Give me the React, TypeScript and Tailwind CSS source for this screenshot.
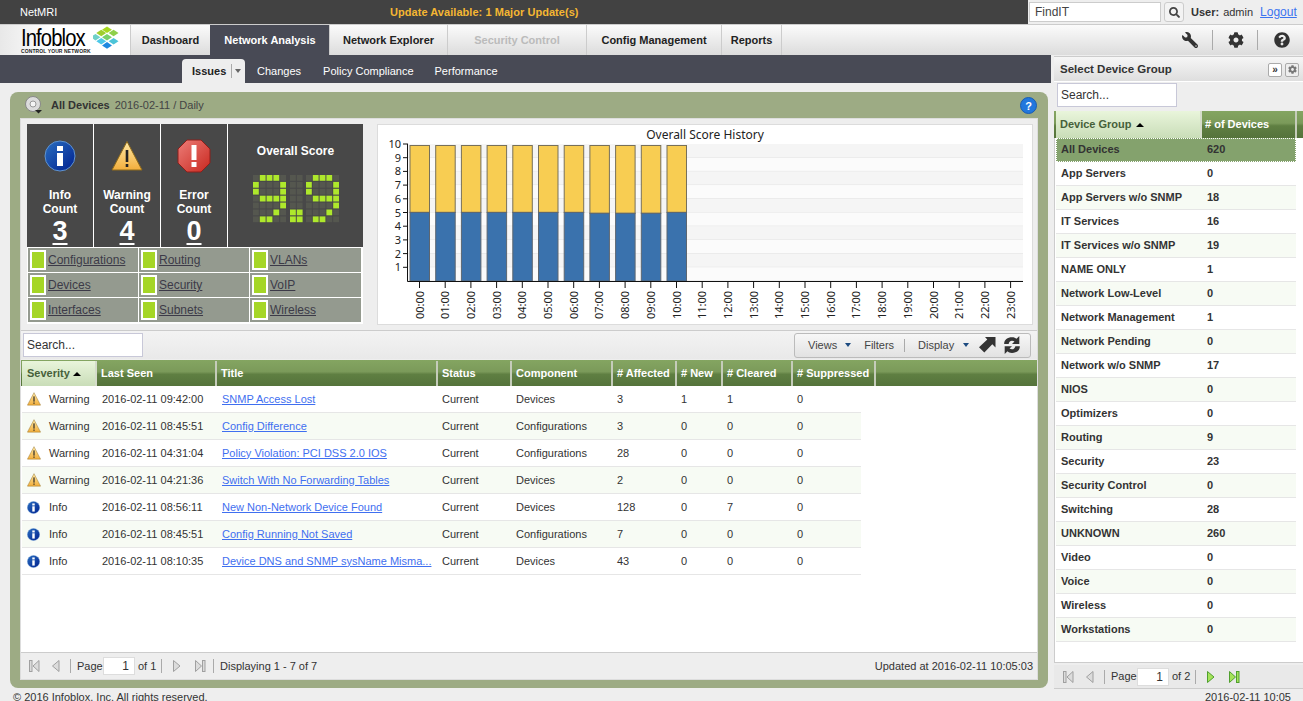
import { FaWrench, FaCog, FaQuestionCircle, FaSearch } from 'react-icons/fa';

const tabs = [
  { label: 'Dashboard', w: 'w-[80px]', cls: 'text-[#222] border-[#ccc]' },
  { label: 'Network Analysis', w: 'w-[119px]', cls: 'bg-[#484a55] text-white border-[#484a55]' },
  { label: 'Network Explorer', w: 'w-[118px]', cls: 'text-[#222] border-[#ccc]' },
  { label: 'Security Control', w: 'w-[139px]', cls: 'text-[#bbb] border-[#ccc]' },
  { label: 'Config Management', w: 'w-[135px]', cls: 'text-[#222] border-[#ccc]' },
  { label: 'Reports', w: 'w-[60px]', cls: 'text-[#222] border-[#ccc]' },
];

const issues = [
  ['Warning', '2016-02-11 09:42:00', 'SNMP Access Lost', 'Current', 'Devices', '3', '1', '1', '0'],
  ['Warning', '2016-02-11 08:45:51', 'Config Difference', 'Current', 'Configurations', '3', '0', '0', '0'],
  ['Warning', '2016-02-11 04:31:04', 'Policy Violation: PCI DSS 2.0 IOS', 'Current', 'Configurations', '28', '0', '0', '0'],
  ['Warning', '2016-02-11 04:21:36', 'Switch With No Forwarding Tables', 'Current', 'Devices', '2', '0', '0', '0'],
  ['Info', '2016-02-11 08:56:11', 'New Non-Network Device Found', 'Current', 'Devices', '128', '0', '7', '0'],
  ['Info', '2016-02-11 08:45:51', 'Config Running Not Saved', 'Current', 'Configurations', '7', '0', '0', '0'],
  ['Info', '2016-02-11 08:10:35', 'Device DNS and SNMP sysName Misma...', 'Current', 'Devices', '43', '0', '0', '0'],
];

const groups = [
  ['All Devices', '620'], ['App Servers', '0'], ['App Servers w/o SNMP', '18'], ['IT Services', '16'],
  ['IT Services w/o SNMP', '19'], ['NAME ONLY', '1'], ['Network Low-Level', '0'], ['Network Management', '1'],
  ['Network Pending', '0'], ['Network w/o SNMP', '17'], ['NIOS', '0'], ['Optimizers', '0'], ['Routing', '9'],
  ['Security', '23'], ['Security Control', '0'], ['Switching', '28'], ['UNKNOWN', '260'], ['Video', '0'],
  ['Voice', '0'], ['Wireless', '0'], ['Workstations', '0'],
];

const issueCols = [
  ['Last Seen', 'w-[120px]'], ['Title', 'w-[221px]'], ['Status', 'w-[74px]'], ['Component', 'w-[101px]'],
  ['# Affected', 'w-[64px]'], ['# New', 'w-[46px]'], ['# Cleared', 'w-[70px]'], ['# Suppressed', 'w-[83px]'],
];

const headerBg = 'bg-[linear-gradient(#84a561,#7b9a5a_45%,#5f7f42_55%,#55733b)]';
const activeHeaderBg = 'bg-[linear-gradient(#e9f5db,#c9ddb8)]';

function InfoIcon({ size }: { size: number }) {
  return (
    <svg width={size} height={size} viewBox="0 0 32 32">
      <defs>
        <linearGradient id="infoFill" x1="0" y1="0" x2="1" y2="1">
          <stop offset="0" stopColor="#2a6fc0" />
          <stop offset="1" stopColor="#00208f" />
        </linearGradient>
      </defs>
      <circle cx="16" cy="16" r="15" fill="url(#infoFill)" stroke="#5f93cf" strokeWidth="1" />
      <rect x="13" y="6" width="6" height="5" fill="#fff" />
      <rect x="13" y="13" width="6" height="13" fill="#fff" />
    </svg>
  );
}

function WarnIcon({ size }: { size: number }) {
  return (
    <svg width={size} height={size} viewBox="0 0 32 32">
      <defs>
        <linearGradient id="warnFill" x1="0" y1="0" x2="0" y2="1">
          <stop offset="0" stopColor="#ffe9a6" />
          <stop offset="1" stopColor="#f2ae3c" />
        </linearGradient>
      </defs>
      <path d="M16 1.5 31 30H1z" fill="url(#warnFill)" stroke="#8f6a1a" strokeWidth="1" strokeLinejoin="round" />
      <rect x="14.7" y="10" width="2.6" height="12" fill="#222" />
      <rect x="14.7" y="24" width="2.6" height="3" fill="#222" />
    </svg>
  );
}

function ErrorIcon({ size }: { size: number }) {
  return (
    <svg width={size} height={size} viewBox="0 0 34 34">
      <defs>
        <linearGradient id="errFill" x1="0" y1="0" x2="1" y2="1">
          <stop offset="0" stopColor="#ec7d78" />
          <stop offset="1" stopColor="#c9281f" />
        </linearGradient>
      </defs>
      <path d="M10 1h14l9 9v14l-9 9H10l-9-9V10z" fill="url(#errFill)" stroke="#8c1f1a" strokeWidth="1" />
      <rect x="14.5" y="6" width="5" height="15" fill="#fff" />
      <rect x="14.5" y="23" width="5" height="5" fill="#fff" />
    </svg>
  );
}

function LedScore() {
  const digit = ['.###.', '#...#', '#...#', '.####', '....#', '...#.', '.##..'];
  const point = ['..', '..', '..', '..', '..', '##', '##'];
  const group = (pattern: string[], x: number) =>
    pattern.flatMap((row, r) =>
      row.split('').map((c, i) => (
        <rect
          key={`${x}-${r}-${i}`}
          x={x + i * 6.8}
          y={3 + r * 6.9}
          width="5.8"
          height="5.8"
          fill={c === '#' ? '#aee82c' : '#55574f'}
        />
      )),
    );
  return (
    <svg width="94" height="54" viewBox="0 0 94 54" className="mt-[12px] ml-[5px]">
      {group(digit, 2)}
      {group(point, 39)}
      {group(digit, 55)}
    </svg>
  );
}

function CountCell({ title, count, icon }: { title: string; count: string; icon: React.ReactNode }) {
  return (
    <div className="w-[66px] h-[123px] bg-[#484848] flex flex-col items-center text-white font-bold mr-px">
      <div className="h-[32px] mt-[16px] flex items-center justify-center">{icon}</div>
      <div className="mt-[16px] text-[12px] leading-[14px] text-center">
        {title}
        <br />
        Count
      </div>
      <div className="text-[27px] leading-[30px] underline underline-offset-[3px]">{count}</div>
    </div>
  );
}

function MatrixCell({ label }: { label: string }) {
  return (
    <div className="h-[24px] bg-[#949a8f] flex items-center pl-[2px] gap-[2px] text-[12px] text-[#3c3a48] underline">
      <span className="w-[16px] h-[20px] border-2 border-white bg-[#a5d626] shrink-0" />
      <span>{label}</span>
    </div>
  );
}

function ScoreChart() {
  const ys = [10, 9, 8, 7, 6, 5, 4, 3, 2, 1, 0];
  const yAt = (v: number) => 281 - v * 13.7;
  const hours = Array.from({ length: 24 }, (_, i) => i);
  const xAt = (h: number) => 418.5 + h * 25.7;
  return (
    <svg viewBox="374 124 658 202" width="658" height="202" className="block" fontFamily="'Noto Sans', sans-serif">
      <rect x="376.500" y="124.500" width="655" height="200" fill="#fff" stroke="#dcdcdc" />
      {ys.slice(0, 10).map((v) => (
        <g key={v}>
          <rect x="407" y={yAt(v)} width="615" height="13.7" fill={v % 2 === 0 ? '#f5f5f5' : '#fbfbfb'} />
          <line x1="407" x2="1022" y1={yAt(v) + 13.7} y2={yAt(v) + 13.7} stroke="#e2e2e2" />
          <line x1="402" x2="407" y1={yAt(v)} y2={yAt(v)} stroke="#111" />
          <text x="400" y={yAt(v) + 4} fontSize="11" textAnchor="end" fill="#222">{v}</text>
        </g>
      ))}
      {hours.slice(0, 11).map((h) => {
        const mid = h >= 7 && h <= 9 ? 213.3 : 212.4;
        return (
          <g key={h}>
            <rect x={xAt(h) - 9.5} y="145.5" width="19.5" height={mid - 145.5} fill="#f8cd52" stroke="#77705a" />
            <rect x={xAt(h) - 9.5} y={mid} width="19.5" height={281 - mid} fill="#3a72ad" stroke="#5d6670" />
          </g>
        );
      })}
      <line x1="406.5" x2="406.5" y1="144" y2="281.5" stroke="#111" />
      <line x1="406.5" x2="1022" y1="281.5" y2="281.5" stroke="#111" />
      {hours.map((h) => (
        <g key={h}>
          <line x1={xAt(h)} x2={xAt(h)} y1="281" y2="288" stroke="#111" />
          <text transform={`translate(${xAt(h) + 4} 319) rotate(-90)`} fontSize="11" fill="#222">
            {String(h).padStart(2, '0')}:00
          </text>
        </g>
      ))}
      <text x="704" y="139" fontSize="12" textAnchor="middle" fill="#222">Overall Score History</text>
    </svg>
  );
}

function PagerIcon({ kind, active }: { kind: 'first' | 'prev' | 'next' | 'last'; active?: boolean }) {
  const fill = active ? '#a5e35a' : '#dcdcdc';
  const stroke = active ? '#4f9f2e' : '#a0a0a0';
  return (
    <svg width="14" height="14" viewBox="0 0 14 14">
      {kind === 'first' && <rect x="1.5" y="1.5" width="2.500" height="11" fill={fill} stroke={stroke} />}
      {kind === 'first' && <path d="M11 1.5v11L5 7z" fill={fill} stroke={stroke} />}
      {kind === 'prev' && <path d="M11 1.5v11L4.500 7z" fill={fill} stroke={stroke} />}
      {kind === 'next' && <path d="M4.500 1.500v11L11 7z" fill={fill} stroke={stroke} />}
      {kind === 'last' && <path d="M2.500 1.500v11L8.500 7z" fill={fill} stroke={stroke} />}
      {kind === 'last' && <rect x="9.500" y="1.500" width="2.500" height="11" fill={fill} stroke={stroke} />}
    </svg>
  );
}

function Pager({ pages, nextActive }: { pages: string; nextActive?: boolean }) {
  return (
    <div className="flex items-center text-[11px] text-[#333]">
      <PagerIcon kind="first" />
      <span className="w-[6px]" />
      <PagerIcon kind="prev" />
      <span className="w-px h-[14px] bg-[#aaa] ml-[8px] mr-[6px]" />
      <span className="w-[26px]">Page</span>
      <span className="w-[32px] h-[18px] bg-white border border-[#ddd] mr-[3px] text-right pr-[5px] text-[12px] leading-[16px]">1</span>
      <span className="w-[19px]">{pages}</span>
      <span className="w-px h-[14px] bg-[#aaa] ml-[4px] mr-[7px]" />
      <PagerIcon kind="next" active={nextActive} />
      <span className="w-[10px]" />
      <PagerIcon kind="last" active={nextActive} />
    </div>
  );
}

function InfobloxLogo() {
  const diamonds = [
    ['#a6d81e', 17, 5], ['#9fce2c', 10, 9], ['#8fd04a', 25, 9], ['#6fd0c8', 3, 14], ['#7ad06a', 17, 14],
    ['#4dc8e8', 10, 19], ['#4cc4d8', 25, 19], ['#1e88e0', 17, 24],
  ] as const;
  return (
    <div className="w-[130px] pl-[21px] h-full flex items-start bg-[linear-gradient(90deg,#e8e8e8,#fff_40%)]">
      <div className="w-[72px] flex flex-col text-black">
        <span className="text-[23px] leading-[20px] tracking-[-1px] mt-[3px] scale-x-[0.88] origin-left">Infoblox</span>
        <span className="text-[5px] leading-[6px] font-bold tracking-[0.1px] text-[#222] whitespace-nowrap">CONTROL YOUR NETWORK</span>
      </div>
      <svg width="28" height="26" viewBox="0 0 34 30" className="mt-[0px]">
        {diamonds.map(([c, x, y], i) => (
          <path key={i} d={`M${x} ${y - 4}l6 4-6 4-6-4z`} fill={c} />
        ))}
      </svg>
    </div>
  );
}

export default function App() {
  return (
    <div className="w-[1303px] h-[701px] overflow-hidden flex flex-col bg-[#eeeeee] text-[11px] text-[#333] font-['Liberation_Sans',Arial,sans-serif]">
      {/* Top bar */}
      <div className="h-[24px] bg-[#424242] flex items-center shrink-0">
        <div className="w-[390px] pl-[20px] text-white">NetMRI</div>
        <div className="text-[#f5b732] font-bold tracking-[0.05px]">Update Available: 1 Major Update(s)</div>
        <div className="ml-auto w-[275px] h-full bg-[#eeeeee] flex items-center pl-px">
          <div className="w-[132px] h-[20px] bg-white border border-[#ccc] pl-[5px] text-[12px] leading-[18px] text-[#444]">FindIT</div>
          <div className="w-[20px] h-[20px] ml-[3px] border border-[#ccc] rounded-[3px] bg-[#f3f3f3] flex items-center justify-center text-[#444]">
            <FaSearch size={11} />
          </div>
          <span className="font-bold ml-[7px]">User:</span>
          <span className="ml-[4px]">admin</span>
          <a href="#" className="ml-[7px] text-[12px] text-[#3b74f0] underline">Logout</a>
        </div>
      </div>

      {/* Main nav */}
      <div className="h-[31px] flex shrink-0 bg-[linear-gradient(#fbfbfb,#dcdcdc)] border-t border-[#ccc]">
        <InfobloxLogo />
        {tabs.map((t) => (
          <div key={t.label} className={`${t.w} ${t.cls} border-l flex items-center justify-center font-bold`}>
            {t.label}
          </div>
        ))}
        <div className="border-l border-[#ccc]" />
        <div className="ml-auto flex items-center text-[#333] pr-[13px]">
          <FaWrench size={16} className="-scale-x-100" />
          <span className="w-px h-[20px] bg-[#aaa] ml-[14px] mr-[15px]" />
          <FaCog size={16} />
          <span className="w-px h-[20px] bg-[#aaa] ml-[13px] mr-[16px]" />
          <FaQuestionCircle size={16} />
        </div>
      </div>

      <div className="flex flex-1 min-h-0">
        {/* Left column */}
        <div className="w-[1051px] shrink-0 flex flex-col">
          <div className="h-[28px] bg-[#484a55] flex items-end pl-[182px] text-white shrink-0">
            <div className="w-[63px] h-[24px] bg-[#eeeeee] rounded-t-[4px] flex items-center pl-[10px] text-[#222] font-bold">
              Issues
              <span className="w-px h-[14px] bg-[#aaa] ml-[5px]" />
              <span className="ml-[3px] border-x-[3px] border-t-[4px] border-x-transparent border-t-[#666]" />
            </div>
            <span className="h-[24px] leading-[24px] ml-[12px]">Changes</span>
            <span className="h-[24px] leading-[24px] ml-[22px]">Policy Compliance</span>
            <span className="h-[24px] leading-[24px] ml-[21px]">Performance</span>
          </div>

          <div className="mt-[9px] ml-[10px] w-[1038px] h-[596px] shrink-0 bg-[#9dab84] rounded-[8px] flex flex-col px-[10px] pb-[8px]">
            <div className="h-[26px] shrink-0 flex items-center">
              <svg width="18" height="18" viewBox="0 0 18 18" className="ml-[5px] mr-[8px]">
                <circle cx="8" cy="8" r="7.5" fill="#dcdcdc" stroke="#888" />
                <circle cx="8" cy="8" r="3" fill="#f5f5f5" stroke="#999" />
                <path d="M10 14h7l-3.5 3.5z" fill="#222" />
              </svg>
              <span className="font-bold text-[#333]">All Devices</span>
              <span className="ml-[5px] text-[#444]">2016-02-11 / Daily</span>
              <svg width="17" height="17" viewBox="0 0 17 17" className="ml-auto mr-[1px]">
                <circle cx="8.5" cy="8.5" r="8" fill="#2277dd" stroke="#1a5cb0" />
                <text x="8.5" y="12.5" fontSize="11" fontWeight="bold" textAnchor="middle" fill="#fff">?</text>
              </svg>
            </div>

            <div className="flex-1 min-h-0 flex flex-col bg-white border border-[#ddd]">
              {/* Summary + chart */}
              <div className="h-[211px] shrink-0 flex bg-[#eeeeee] pt-[5px] pl-[6px]">
                <div className="w-[336px] h-[200px] bg-white">
                  <div className="flex">
                    <CountCell title="Info" count="3" icon={<InfoIcon size={32} />} />
                    <CountCell title="Warning" count="4" icon={<WarnIcon size={32} />} />
                    <CountCell title="Error" count="0" icon={<ErrorIcon size={34} />} />
                    <div className="flex-1 h-[123px] bg-[#484848] flex flex-col items-center pt-[18px] text-white font-bold text-[12px]">
                      Overall Score
                      <LedScore />
                    </div>
                  </div>
                  <div className="grid grid-cols-[110px_110px_111px] gap-px px-px pt-px">
                    {['Configurations', 'Routing', 'VLANs', 'Devices', 'Security', 'VoIP', 'Interfaces', 'Subnets', 'Wireless'].map((l) => (
                      <MatrixCell key={l} label={l} />
                    ))}
                  </div>
                </div>
                <div className="ml-[12px]">
                  <ScoreChart />
                </div>
              </div>

              {/* Toolbar */}
              <div className="h-[29px] shrink-0 flex items-center pl-[2px] pr-[6px] bg-[linear-gradient(#f3f3f3,#e9e9e9)] border-t border-[#ccc]">
                <div className="w-[120px] h-[24px] bg-white border border-[#c8c8d8] pl-[3px] text-[12px] leading-[22px] text-[#333]">Search...</div>
                <div className="ml-auto w-[237px] h-[25px] border border-[#bbb] rounded-[3px] bg-[linear-gradient(#f7f7f7,#e2e2e2)] flex items-center pl-[13px] text-[#444]">
                  Views
                  <span className="ml-[8px] border-x-[3px] border-t-[4px] border-x-transparent border-t-[#1c4a80]" />
                  <span className="ml-[13px]">Filters</span>
                  <span className="w-px h-[13px] bg-[#aaa] ml-[10px] mr-[13px]" />
                  Display
                  <span className="ml-[9px] border-x-[3px] border-t-[4px] border-x-transparent border-t-[#1c4a80]" />
                  <svg width="18" height="18" viewBox="0 0 18 18" className="ml-[9px]">
                    <path d="M7 1h10.500v10.500l-3.200-3.200-8 8.200L1 11.200l8.300-7.800z" fill="#333" />
                  </svg>
                  <svg width="18" height="18" viewBox="1 1 16 16" className="ml-[7px]">
                    <path d="M2 8c0-4 3-6 7-6 2 0 3 .6 4 1.4L15.5 1v7H9l2.200-2.200C10.600 5.400 9.800 5.200 9 5.200 7.500 5.200 6.500 6.200 6 8zM16 10c0 4-3 6-7 6-2 0-3-.6-4-1.400L2.500 17v-7H9l-2.200 2.200c.6.4 1.400.6 2.200.6 1.500 0 2.500-1 3-2.800z" fill="#333" />
                  </svg>
                </div>
              </div>

              {/* Issues table */}
              <div className={`h-[27px] shrink-0 flex ${headerBg} pl-px pt-px font-bold text-white border-t border-[#eee]`}>
                <div className={`w-[75px] ${activeHeaderBg} text-[#46603a] flex items-center pl-[5px] border-r-2 border-[#d5dccb]`}>
                  Severity
                  <span className="ml-[3px] border-x-[4px] border-b-[4px] border-x-transparent border-b-black" />
                </div>
                {issueCols.map(([label, w]) => (
                  <div key={label} className={`${w} flex items-center pl-[4px] border-r-2 border-[#c5ccba]`}>{label}</div>
                ))}
              </div>
              <div className="flex-1 min-h-0">
                {issues.map((r, i) => (
                  <div key={r[1] + r[2]} className={`w-[839px] h-[27px] flex items-center border-b border-[#e6e6e6] ml-px ${i % 2 === 1 ? 'bg-[#f7fbf4]' : 'bg-white'}`}>
                    <div className="w-[75px] flex items-center pl-[5px] gap-[8px]">
                      {r[0] === 'Warning' ? <WarnIcon size={14} /> : <InfoIcon size={13} />}
                      <span className={r[0] === 'Info' ? 'ml-[1px]' : ''}>{r[0]}</span>
                    </div>
                    <div className="w-[120px] pl-[5px]">{r[1]}</div>
                    <div className="w-[220px] pl-[5px]"><a href="#" className="text-[#3f6ff0] underline">{r[2]}</a></div>
                    <div className="w-[74px] pl-[5px]">{r[3]}</div>
                    <div className="w-[101px] pl-[5px]">{r[4]}</div>
                    <div className="w-[64px] pl-[5px]">{r[5]}</div>
                    <div className="w-[46px] pl-[5px]">{r[6]}</div>
                    <div className="w-[70px] pl-[5px]">{r[7]}</div>
                    <div className="w-[68px] pl-[5px]">{r[8]}</div>
                  </div>
                ))}
              </div>

              {/* Pager */}
              <div className="h-[27px] shrink-0 flex items-center pl-[7px] pr-[4px] bg-[#eeeeee] border-t border-[#ccc]">
                <Pager pages="of 1" />
                <span className="w-px h-[14px] bg-[#aaa] mx-[6px]" />
                <span>Displaying 1 - 7 of 7</span>
                <span className="ml-auto">Updated at 2016-02-11 10:05:03</span>
              </div>
            </div>
          </div>

          <div className="pl-[13px] mt-[3px] leading-[13px]">© 2016 Infoblox, Inc. All rights reserved.</div>
        </div>

        {/* Right panel */}
        <div className="ml-[3px] flex-1 min-w-0 flex flex-col border-t border-[#ccc] mt-px">
          <div className="h-[25px] shrink-0 flex items-center pt-px pl-[6px] pr-[4px] bg-[linear-gradient(#f6f6f6,#dedede)] border-b border-[#fff] font-bold text-[11.5px] text-[#333]">
            Select Device Group
            <span className="ml-auto w-[14px] h-[14px] border border-[#aaa] rounded-[2px] bg-white flex items-center justify-center text-[10px] leading-none">»</span>
            <span className="ml-[3px] w-[14px] h-[14px] border border-[#aaa] rounded-[2px] bg-[#eee] flex items-center justify-center text-[#777]">
              <FaCog size={9} />
            </span>
          </div>
          <div className="h-[29px] shrink-0 pl-[3px] pt-px bg-[#eeeeee]">
            <div className="w-[120px] h-[24px] bg-white border border-[#c8c8d8] pl-[3px] text-[12px] leading-[22px] text-[#333]">Search...</div>
          </div>
          <div className={`h-[27px] shrink-0 flex ${headerBg} font-bold text-white pl-[2px]`}>
            <div className={`w-[146px] ${activeHeaderBg} text-[#46603a] flex items-center pl-[4px] border-r-2 border-[#d5dccb]`}>
              Device Group
              <span className="ml-[4px] border-x-[4px] border-b-[4px] border-x-transparent border-b-black" />
            </div>
            <div className="w-[95px] flex items-center pl-[3px] border-r-2 border-[#c5ccba]">{'# of Devices'}</div>
          </div>
          <div className="h-[525px] shrink-0 bg-white pl-px border-l border-[#ccc] border-b">
            {groups.map((g, i) => (
              <div
                key={g[0]}
                className={`w-[240px] h-[24px] flex items-center font-bold border-b ${
                  i === 0
                    ? 'bg-[#84a26d] border-[#84a26d] outline-1 outline-dotted outline-white -outline-offset-1'
                    : `border-[#e6e6e6] ${i % 2 === 1 ? 'bg-white' : 'bg-[#f7fbf4]'}`
                }`}
              >
                <span className="w-[146px] pl-[5px]">{g[0]}</span>
                <span className="pl-[5px]">{g[1]}</span>
              </div>
            ))}
          </div>
          <div className="h-[24px] shrink-0 flex items-center pl-[8px] bg-[#e9e9e9] border-b border-[#ccc] mt-[2px]">
            <Pager pages="of 2" nextActive />
          </div>
          <div className="text-right pr-[12px] mt-[2px] leading-[13px]">2016-02-11 10:05</div>
        </div>
      </div>
    </div>
  );
}
